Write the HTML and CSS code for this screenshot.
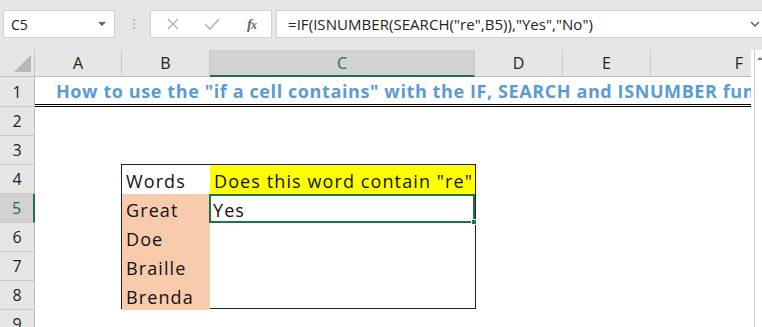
FILE: index.html
```html
<!DOCTYPE html>
<html>
<head>
<meta charset="utf-8">
<link rel="stylesheet" href="styles.css">
</head>
<body>
<div class="app">
  <div class="toolbar">
    <div class="namebox"><span>C5</span><span class="caret"></span></div>
    <div class="grip"><i></i><i></i><i></i></div>
    <div class="fxbuttons">
      <svg class="ico" width="16" height="16" viewBox="0 0 16 16"><path d="M3 3 L13 13 M13 3 L3 13" stroke="#b3b3b3" stroke-width="1.4" fill="none"/></svg>
      <svg class="ico" width="18" height="16" viewBox="0 0 18 16"><path d="M2 8 L7 13 L16 3" stroke="#b3b3b3" stroke-width="1.6" fill="none"/></svg>
      <span class="fx"><i>f</i><span>x</span></span>
    </div>
    <div class="formula"><span>=IF(ISNUMBER(SEARCH("re",B5)),"Yes","No")</span>
      <svg class="chev" width="10" height="8" viewBox="0 0 10 8"><path d="M1 2 L5 6 L9 2" stroke="#555" stroke-width="1.3" fill="none"/></svg>
    </div>
  </div>
  <div class="sheetwrap">
    <div class="sheet">
      <div class="corner"><span class="tri"></span></div>
      <div class="colh">A</div>
      <div class="colh">B</div>
      <div class="colh sel">C</div>
      <div class="colh">D</div>
      <div class="colh">E</div>
      <div class="colh last">F</div>

      <div class="rowh r1">1</div>
      <div class="rowh r2">2</div>
      <div class="rowh r3">3</div>
      <div class="rowh r4">4</div>
      <div class="rowh r5 sel">5</div>
      <div class="rowh r6">6</div>
      <div class="rowh r7">7</div>
      <div class="rowh r8">8</div>
      <div class="rowh r9">9</div>

      <div class="title"><span>How to use the "if a cell contains" with the IF, SEARCH and ISNUMBER function</span></div>

      <div class="tbl">
        <div class="cell">Words</div>
        <div class="cell yellow">Does this word contain "re"</div>
        <div class="cell peach">Great</div>
        <div class="cell active">Yes<span class="handle"></span></div>
        <div class="cell peach">Doe</div>
        <div class="cell"></div>
        <div class="cell peach">Braille</div>
        <div class="cell"></div>
        <div class="cell peach">Brenda</div>
        <div class="cell"></div>
      </div>
    </div>
    <div class="vscroll"><span class="up"></span></div>
  </div>
</div>
</body>
</html>
```
FILE: styles.css
```css
* { box-sizing: border-box; }
html, body { margin: 0; padding: 0; }
body {
  width: 762px;
  height: 327px;
  overflow: hidden;
  background: #e6e6e6;
  font-family: "Open Sans", "Noto Sans", sans-serif;
}
.app { display: flex; flex-direction: column; }
.toolbar {
  height: 50px;
  display: flex;
  align-items: flex-start;
  padding-top: 10px;
  padding-left: 3px;
}
.namebox {
  width: 112px;
  height: 28px;
  background: #fff;
  border: 1px solid #d0d0d0;
  display: flex;
  align-items: center;
  justify-content: space-between;
  padding: 0 8px 0 7px;
  font-size: 14px;
  color: #222;
}
.caret {
  width: 0; height: 0;
  border-left: 4px solid transparent;
  border-right: 4px solid transparent;
  border-top: 4px solid #666;
}
.grip {
  width: 35px;
  height: 28px;
  display: flex;
  flex-direction: column;
  align-items: center;
  justify-content: center;
  gap: 2px;
  padding-left: 3px;
}
.grip i { width: 2px; height: 2px; background: #b9b9b9; display: block; }
.fxbuttons {
  width: 122px;
  height: 28px;
  background: #fff;
  border: 1px solid #d0d0d0;
  display: flex;
  align-items: center;
  padding-left: 14px;
  gap: 22px;
}
.fx {
  font-family: "Liberation Serif", serif;
  color: #666;
  font-size: 15px;
  font-weight: bold;
  letter-spacing: -1px;
  margin-left: 4px;
}
.fx span { font-size: 12px; font-style: italic; }
.formula {
  margin-left: 4px;
  flex: 1;
  height: 28px;
  background: #fff;
  border: 1px solid #d0d0d0;
  border-right: none;
  display: flex;
  align-items: center;
  justify-content: space-between;
  padding-left: 11px;
  padding-right: 2px;
  font-size: 15px;
  letter-spacing: 0.05px;
  color: #222;
}
.sheetwrap { display: flex; height: 277px; background: #fff; }
.sheet {
  display: grid;
  grid-template-columns: 35px 87px 88px 265px 88px 88px 100px;
  grid-template-rows: 27px 30px 29px 29px 29px 29px 29px 29px 29px 29px;
  width: 751px;
  background: #fff;
}
.corner {
  background: #e6e6e6;
  border-right: 1px solid #c6c6c6;
  border-bottom: 1px solid #c6c6c6;
  position: relative;
}
.tri {
  position: absolute;
  right: 3px;
  bottom: 4px;
  width: 0; height: 0;
  border-left: 17px solid transparent;
  border-bottom: 17px solid #b7b7b7;
}
.colh {
  background: #e6e6e6;
  border-right: 1px solid #c9c9c9;
  border-bottom: 1px solid #bdbdbd;
  display: flex;
  align-items: center;
  justify-content: center;
  font-size: 16px;
  color: #222;
}
.colh.last { justify-content: flex-end; padding-right: 8px; border-right: none; }
.colh.sel {
  background: #d2d2d2;
  color: #217346;
  border-bottom: 2px solid #217346;
}
.rowh {
  grid-column: 1;
  background: #e6e6e6;
  border-right: 1px solid #bdbdbd;
  border-bottom: 1px solid #c9c9c9;
  display: flex;
  align-items: center;
  justify-content: center;
  font-size: 16px;
  color: #222;
}
.rowh.sel {
  background: #d2d2d2;
  color: #217346;
  border-right: 2px solid #217346;
}
.r1 { grid-row: 2; } .r2 { grid-row: 3; } .r3 { grid-row: 4; }
.r4 { grid-row: 5; } .r5 { grid-row: 6; } .r6 { grid-row: 7; }
.r7 { grid-row: 8; } .r8 { grid-row: 9; } .r9 { grid-row: 10; }
.title {
  grid-column: 2 / 8;
  grid-row: 2;
  border-bottom: 3px double #000;
  overflow: hidden;
  white-space: nowrap;
  display: flex;
  align-items: center;
  padding-left: 21px;
  padding-top: 1px;
  color: #5b9bd5;
  font-family: "Open Sans", sans-serif;
  font-weight: bold;
  font-size: 18px;
  letter-spacing: 0.6px;
}
.tbl {
  grid-column: 3 / 5;
  grid-row: 5 / 10;
  display: grid;
  grid-template-columns: 88px 1fr;
  grid-template-rows: repeat(5, 29px);
  border: 1px solid #222;
  margin-top: -1px;
  margin-bottom: 1px;
  margin-left: -1px;
  margin-right: -1px;
  position: relative;
}
.cell {
  display: flex;
  align-items: flex-end;
  padding: 0 0 2px 4px;
  font-family: "Open Sans", sans-serif;
  font-size: 18px;
  letter-spacing: 1.1px;
  color: #111;
  line-height: 22px;
  position: relative;
}
.peach { background: #f8cbad; }
.yellow { background: #ffff00; }
.active {
  border: 2px solid #217346;
  padding-left: 2px;
  padding-bottom: 0;
  margin-left: -1px;
}
.handle {
  position: absolute;
  right: -4px;
  bottom: -4px;
  width: 6px;
  height: 6px;
  background: #217346;
  border: 1px solid #fff;
}
.vscroll {
  flex: 1;
  background: #fff;
  border-left: 1px solid #d0d0d0;
  margin-left: 3px;
  position: relative;
}
.up {
  position: absolute;
  top: 7px;
  left: 2px;
  width: 0; height: 0;
  border-left: 3px solid transparent;
  border-right: 3px solid transparent;
  border-bottom: 3px solid #777;
}
```
